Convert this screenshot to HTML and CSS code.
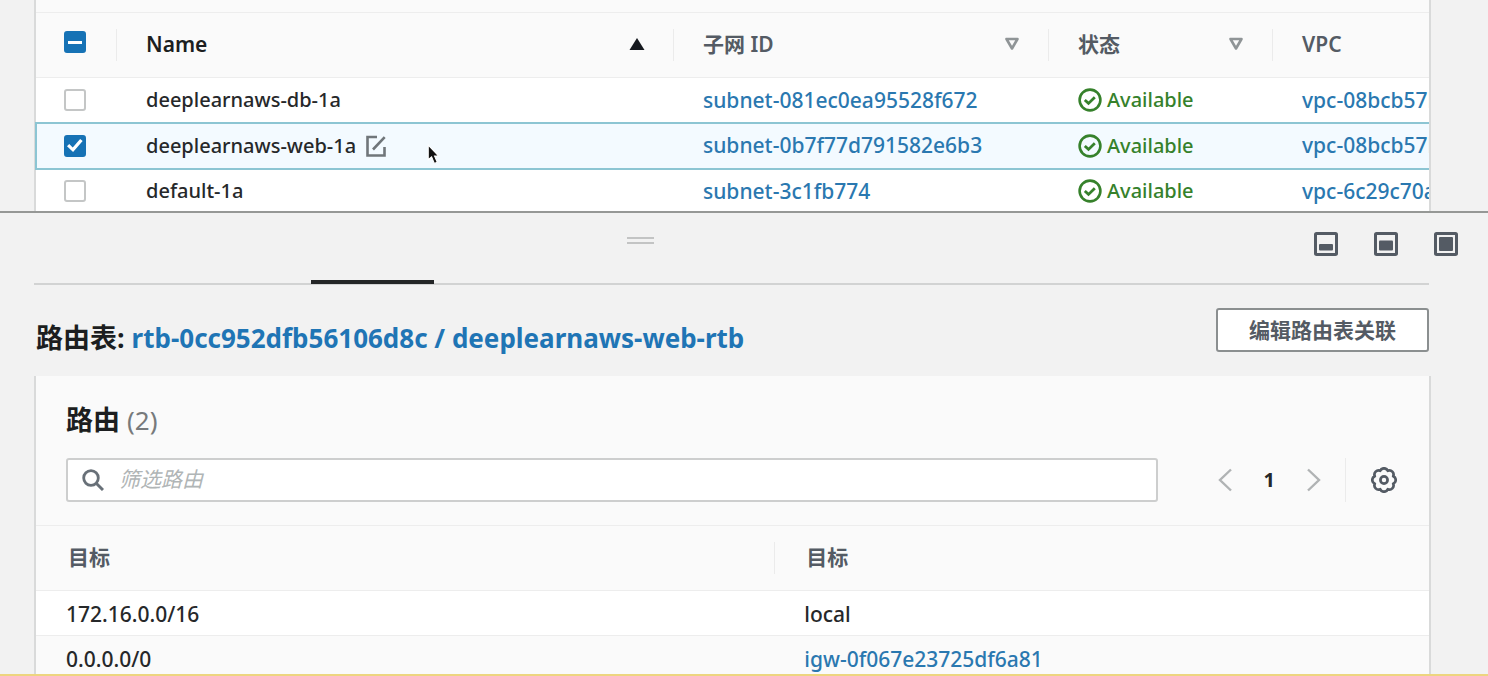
FILE: index.html
```html
<!DOCTYPE html>
<html lang="zh-CN">
<head>
<meta charset="utf-8">
<meta name="viewport" content="width=device-width, initial-scale=1">
<title>子网</title>
<link rel="stylesheet" href="styles.css">
</head>
<body>
<svg class="defs" aria-hidden="true">
  <symbol id="ok" viewBox="0 0 24 24"><circle cx="12" cy="12" r="10.4" fill="none" stroke="currentColor" stroke-width="2.6"/><path d="M6.8 12l3.7 3.4 6.3-6.2" fill="none" stroke="currentColor" stroke-width="2.8"/></symbol>
  <symbol id="sort" viewBox="0 0 16 14"><path d="M2.5 2h11L8 11.5z" fill="none" stroke="currentColor" stroke-width="2.6" stroke-linejoin="round"/></symbol>
</svg>
<div class="app">
  <section class="list-pane">
    <div class="card list-card">
      <table class="subnets">
        <colgroup><col class="col-check"><col class="col-name"><col class="col-id"><col class="col-state"><col class="col-vpc"></colgroup>
        <thead>
          <tr>
            <th class="check"><input type="checkbox" class="box mixed" aria-label="全选"></th>
            <th class="sorted"><div class="head">Name <svg class="sort dark" viewBox="0 0 16 14"><path d="M8 1l7.5 12H.5z" fill="currentColor"/></svg></div></th>
            <th><div class="head">子网 ID <svg class="sort"><use href="#sort"/></svg></div></th>
            <th><div class="head">状态 <svg class="sort"><use href="#sort"/></svg></div></th>
            <th><div class="head">VPC</div></th>
          </tr>
        </thead>
        <tbody>
          <tr>
            <td class="check"><input type="checkbox" class="box" aria-label="deeplearnaws-db-1a"></td>
            <td>deeplearnaws-db-1a</td>
            <td><a href="#">subnet-081ec0ea95528f672</a></td>
            <td><span class="status"><svg><use href="#ok"/></svg>Available</span></td>
            <td><a href="#">vpc-08bcb57b</a></td>
          </tr>
          <tr class="selected">
            <td class="check"><input type="checkbox" class="box" checked aria-label="deeplearnaws-web-1a"></td>
            <td><span class="name">deeplearnaws-web-1a<button class="edit" aria-label="编辑名称"><svg viewBox="0 0 20 22"><path d="M11 2H1.5v18.5h17V12M7 14.5L18.7 2.2" fill="none" stroke="currentColor" stroke-width="2.6"/></svg></button></span></td>
            <td><a href="#">subnet-0b7f77d791582e6b3</a></td>
            <td><span class="status"><svg><use href="#ok"/></svg>Available</span></td>
            <td><a href="#">vpc-08bcb57b</a></td>
          </tr>
          <tr>
            <td class="check"><input type="checkbox" class="box" aria-label="default-1a"></td>
            <td>default-1a</td>
            <td><a href="#">subnet-3c1fb774</a></td>
            <td><span class="status"><svg><use href="#ok"/></svg>Available</span></td>
            <td><a href="#">vpc-6c29c70a</a></td>
          </tr>
        </tbody>
      </table>
    </div>
  </section>

  <section class="detail-pane">
    <div class="split-bar">
      <div class="grip"></div>
      <div class="layout-buttons">
        <button aria-label="小面板"><svg viewBox="0 0 24 24"><rect x="1.5" y="1.5" width="21" height="21" rx="1" fill="none" stroke="currentColor" stroke-width="3"/><rect x="5" y="12" width="14" height="6.5" rx="1" fill="currentColor"/></svg></button>
        <button aria-label="中面板"><svg viewBox="0 0 24 24"><rect x="1.5" y="1.5" width="21" height="21" rx="1" fill="none" stroke="currentColor" stroke-width="3"/><rect x="5" y="8.5" width="14" height="10" rx="1" fill="currentColor"/></svg></button>
        <button aria-label="大面板"><svg viewBox="0 0 24 24"><rect x="1.5" y="1.5" width="21" height="21" rx="1" fill="none" stroke="currentColor" stroke-width="3"/><rect x="5" y="5" width="14" height="14" rx="1" fill="currentColor"/></svg></button>
      </div>
    </div>
    <div class="tabs"><span class="active-tab"></span></div>

    <div class="title-row">
      <h1>路由表: <a href="#">rtb-0cc952dfb56106d8c / deeplearnaws-web-rtb</a></h1>
      <button class="outline">编辑路由表关联</button>
    </div>

    <div class="card routes-card">
      <header class="routes-head">
        <h2>路由 <span class="count">(2)</span></h2>
        <div class="tools">
          <label class="search">
            <svg viewBox="0 0 22 22"><circle cx="9" cy="9" r="7.3" fill="none" stroke="currentColor" stroke-width="2.8"/><path d="M14.2 14.2L21 21" stroke="currentColor" stroke-width="3"/></svg>
            <input type="text" placeholder="筛选路由" aria-label="筛选路由">
          </label>
          <nav class="pager">
            <button class="arrow" aria-label="上一页"><svg viewBox="0 0 14 24"><path d="M13 1.5L2 12l11 10.5" fill="none" stroke="currentColor" stroke-width="2.4"/></svg></button>
            <button class="page">1</button>
            <button class="arrow" aria-label="下一页"><svg viewBox="0 0 14 24"><path d="M1 1.5L12 12 1 22.5" fill="none" stroke="currentColor" stroke-width="2.4"/></svg></button>
          </nav>
          <button class="gear" aria-label="设置"><svg viewBox="0 0 24 24" fill="none" stroke="currentColor" stroke-width="2.5" stroke-linejoin="round"><path d="M8.5 3.5A3.8 3.8 0 0 1 15.5 3.5A3.8 3.8 0 0 1 20.5 8.500A3.800 3.800 0 0 1 20.500 15.500A3.800 3.800 0 0 1 15.500 20.500A3.800 3.800 0 0 1 8.500 20.500A3.800 3.800 0 0 1 3.500 15.500A3.800 3.800 0 0 1 3.500 8.500A3.800 3.800 0 0 1 8.500 3.500z"/><circle cx="12" cy="12" r="3.3"/></svg></button>
        </div>
      </header>
      <table class="routes">
        <thead><tr><th>目标</th><th>目标</th></tr></thead>
        <tbody>
          <tr><td>172.16.0.0/16</td><td>local</td></tr>
          <tr><td>0.0.0.0/0</td><td><a href="#">igw-0f067e23725df6a81</a></td></tr>
        </tbody>
      </table>
    </div>
  </section>
  <div class="bottom-strip"></div>
</div>
<svg class="pointer" viewBox="0 0 12 20" aria-hidden="true"><path d="M1 1v14l3.2-2.8L6.8 18.5l2.7-1.2L7 11.5h4z" fill="#111" stroke="#fff" stroke-width="1"/></svg>
</body>
</html>
```

FILE: styles.css
```css
* { box-sizing: border-box; }

body {
  margin: 0;
  background: #f2f2f2;
  color: #26282a;
  font-family: "Noto Sans", "Noto Sans CJK SC", sans-serif;
  font-size: 20px;
  font-weight: 500;
  line-height: 28px;
}

button, input { font: inherit; color: inherit; }
button { padding: 0; border: 0; background: none; display: flex; align-items: center; justify-content: center; }
a { color: #2a78b0; text-decoration: none; }
svg { display: block; flex: none; }
.defs { position: absolute; width: 0; height: 0; }

.app { display: flex; flex-direction: column; height: 100vh; overflow: hidden; }

.card {
  background: #fafafa;
  border: solid #d9dada;
  border-width: 0 2px;
  overflow: hidden;
}

table { border-collapse: collapse; table-layout: fixed; }
th, td { padding: 0 28px 0 30px; text-align: left; white-space: nowrap; }
th { position: relative; height: 65px; padding-bottom: 2px; color: #545b64; font-size: 21px; font-weight: 600; border: solid #ededed; border-width: 1px 0; }
td a { font-size: 21px; }
th + th::before {
  content: "";
  position: absolute;
  left: 0;
  top: 16px;
  bottom: 16px;
  border-left: 1px solid #ebebeb;
}

/* Subnet list */
.list-pane { flex: none; padding: 0 57px 0 34px; }
.list-card {
  padding: 12px 0 0 2px;
  border-left: 0;
  background: linear-gradient(90deg, #d9dada 2px, #fafafa 2px);
}
.subnets { width: 1462px; }
.subnets tbody tr { height: 45px; background: #fff; }
.subnets td { padding-right: 0; }
.subnets .check { padding-left: 28px; }
.subnets th.check { padding-top: 18px; vertical-align: top; }
.subnets .selected { height: 46px; background: #f3faff; outline: 2px solid #8cc5d3; outline-offset: -1px; }
.col-check { width: 80px; }
.col-name { width: 557px; }
.col-id { width: 375px; }
.col-state { width: 224px; }
.sorted { color: #1c1e20; }
.head { display: flex; align-items: center; justify-content: space-between; }
.sort { width: 16px; height: 14px; color: #8f9496; }
.dark { color: #16191f; }

.box {
  appearance: none;
  display: block;
  width: 22px;
  height: 22px;
  margin: 0;
  border: 2px solid #c4c6c6;
  border-radius: 3px;
  background: #fff;
}
.box.mixed, .box:checked { display: grid; place-items: center; border-color: #1672b5; background: #1672b5; }
.box.mixed::before { content: ""; width: 14px; height: 3px; background: #fff; }
.box:checked::before {
  content: "";
  width: 16px;
  height: 14px;
  background: #fff;
  clip-path: polygon(0 55%, 14% 40%, 36% 65%, 82% 4%, 98% 18%, 38% 96%);
}

.name { display: flex; align-items: center; gap: 10px; }
.edit { color: #70767a; }
.edit svg { width: 20px; height: 22px; }
.status { display: flex; align-items: center; gap: 5px; color: #36812b; }
.status svg { width: 24px; height: 24px; }

/* Detail panel, drawn over the end of the list */
.detail-pane {
  position: relative;
  flex: 1;
  min-height: 0;
  margin-top: -3px;
  padding: 0 57px 0 34px;
  border-top: 2px solid #969896;
  background: #f2f2f2;
  overflow: hidden;
}
.split-bar { display: flex; justify-content: space-between; margin: 0 -57px 0 -34px; padding: 19px 30px 24px 0; }
.grip { width: 27px; height: 7px; margin: 5px 0 0 43%; border: solid #c3c4c4; border-width: 2px 0; }
.layout-buttons { display: flex; gap: 36px; color: #545b64; }
.layout-buttons svg { width: 24px; height: 24px; }
.tabs { margin-right: 2px; padding-left: 277px; border-bottom: 2px solid #d2d3d3; }
.active-tab { display: block; width: 123px; height: 4px; margin-bottom: -1px; background: #242627; }

.title-row { display: flex; align-items: flex-end; justify-content: space-between; margin: 23px 0 24px; padding: 0 2px; }
h1, h2 { margin: 0; color: #1c1e20; font-size: 27px; font-weight: 700; }
.title-row a { color: #1f75b5; font-size: 26px; }
.outline {
  width: 213px;
  height: 44px;
  border: 2px solid #8b8f90;
  border-radius: 3px;
  background: #fff;
  color: #545b64;
  font-size: 21px;
  font-weight: 700;
}

.routes-head { padding: 30px 32px 23px 30px; }
.count { color: #777a7c; font-size: 26px; font-weight: 400; }
.tools { display: flex; align-items: center; margin-top: 24px; }
.search {
  display: flex;
  align-items: center;
  flex: 1;
  gap: 15px;
  height: 44px;
  padding: 0 14px;
  border: 2px solid #cdcece;
  border-radius: 3px;
  background: #fff;
  color: #687078;
}
.search svg { width: 22px; height: 22px; }
.search input { flex: 1; min-width: 0; padding: 0; border: 0; outline: 0; background: none; }
.search input::placeholder { color: #b0b5b6; font-style: italic; font-size: 21px; font-weight: 400; opacity: 1; }
.pager { display: flex; align-items: center; gap: 32px; padding: 0 24px 0 60px; }
.arrow { color: #b0b3b4; }
.arrow svg { width: 14px; height: 24px; }
.page { font-weight: 700; }
.gear { height: 44px; padding-left: 25px; border-left: 1px solid #ebebeb; color: #545b64; }
.gear svg { width: 26px; height: 26px; }

.routes { width: 100%; }
.routes th:first-child { width: 53%; }
.routes th, .routes th + th { padding-left: 32px; }
.routes td { padding-top: 3px; font-size: 21px; }
.routes tbody tr { height: 45px; background: #fff; }
.routes tbody tr + tr { background: #fafafa; border-top: 1px solid #ededed; }

.bottom-strip { flex: none; height: 2px; background: #edd57f; }

.pointer { position: absolute; left: 427px; top: 144px; width: 13px; height: 21px; }
```
